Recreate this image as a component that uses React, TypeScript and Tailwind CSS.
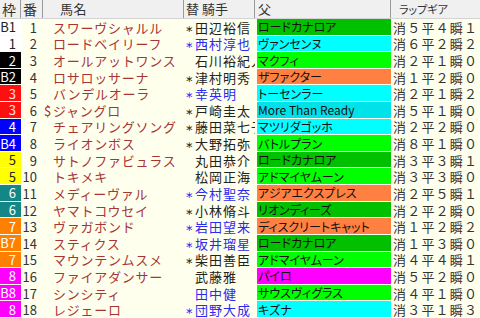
type Horse = {
  frame: string;
  waku: number;
  no: number;
  mark?: string;
  name: string;
  sub: boolean;
  jockey: string;
  blue?: boolean;
  sire: string;
  tone: "G" | "L" | "C" | "T" | "O" | "M";
  gear: string;
};

const horses: Horse[] = [
  { frame: "B1", waku: 1, no: 1, name: "スワーヴシャルル", sub: true, jockey: "田辺裕信", sire: "ロードカナロア", tone: "G", gear: "消５平４瞬１" },
  { frame: "1", waku: 1, no: 2, name: "ロードベイリーフ", sub: true, jockey: "西村淳也", blue: true, sire: "ヴァンセンヌ", tone: "C", gear: "消６平２瞬２" },
  { frame: "2", waku: 2, no: 3, name: "オールアットワンス", sub: false, jockey: "石川裕紀人", sire: "マクフィ", tone: "L", gear: "消２平１瞬０" },
  { frame: "B2", waku: 2, no: 4, name: "ロサロッサーナ", sub: true, jockey: "津村明秀", sire: "ザファクター", tone: "O", gear: "消１平２瞬０" },
  { frame: "3", waku: 3, no: 5, name: "バンデルオーラ", sub: true, jockey: "幸英明", blue: true, sire: "トーセンラー", tone: "C", gear: "消２平１瞬２" },
  { frame: "3", waku: 3, no: 6, mark: "$", name: "ジャングロ", sub: true, jockey: "戸崎圭太", sire: "More Than Ready", tone: "T", gear: "消５平１瞬０" },
  { frame: "4", waku: 4, no: 7, name: "チェアリングソング", sub: true, jockey: "藤田菜七子", sire: "マツリダゴッホ", tone: "C", gear: "消２平２瞬０" },
  { frame: "B4", waku: 4, no: 8, name: "ライオンボス", sub: true, jockey: "大野拓弥", sire: "バトルプラン", tone: "L", gear: "消８平１瞬０" },
  { frame: "5", waku: 5, no: 9, name: "サトノファビュラス", sub: false, jockey: "丸田恭介", sire: "ロードカナロア", tone: "G", gear: "消３平３瞬１" },
  { frame: "5", waku: 5, no: 10, name: "トキメキ", sub: false, jockey: "松岡正海", sire: "アドマイヤムーン", tone: "L", gear: "消３平３瞬０" },
  { frame: "6", waku: 6, no: 11, name: "メディーヴァル", sub: true, jockey: "今村聖奈", blue: true, sire: "アジアエクスプレス", tone: "O", gear: "消２平５瞬１" },
  { frame: "6", waku: 6, no: 12, name: "ヤマトコウセイ", sub: true, jockey: "小林脩斗", sire: "リオンディーズ", tone: "G", gear: "消２平２瞬０" },
  { frame: "7", waku: 7, no: 13, name: "ヴァガボンド", sub: true, jockey: "岩田望来", blue: true, sire: "ディスクリートキャット", tone: "O", gear: "消１平２瞬２" },
  { frame: "B7", waku: 7, no: 14, name: "スティクス", sub: true, jockey: "坂井瑠星", blue: true, sire: "ロードカナロア", tone: "G", gear: "消１平３瞬０" },
  { frame: "7", waku: 7, no: 15, name: "マウンテンムスメ", sub: true, jockey: "柴田善臣", sire: "アドマイヤムーン", tone: "L", gear: "消４平４瞬１" },
  { frame: "8", waku: 8, no: 16, name: "ファイアダンサー", sub: false, jockey: "武藤雅", sire: "パイロ", tone: "M", gear: "消５平２瞬０" },
  { frame: "B8", waku: 8, no: 17, name: "シンシティ", sub: false, jockey: "田中健", blue: true, sire: "サウスヴィグラス", tone: "L", gear: "消４平１瞬０" },
  { frame: "8", waku: 8, no: 18, name: "レジェーロ", sub: true, jockey: "団野大成", blue: true, sire: "キズナ", tone: "C", gear: "消３平１瞬３" },
];

const wakuColor: Record<number, string> = {
  1: "bg-white text-[#222]",
  2: "bg-black text-white",
  3: "bg-[#ff1010] text-[#ffe0e0]",
  4: "bg-[#0000ff] text-white",
  5: "bg-[#ffff00] text-[#222]",
  6: "bg-[#138686] text-white",
  7: "bg-[#ff8000] text-white",
  8: "bg-[#ff00ff] text-white",
};

const toneColor: Record<Horse["tone"], string> = {
  G: "bg-[#00c000]",
  L: "bg-[#00ff00]",
  C: "bg-[#00ffff]",
  T: "bg-[#00e2ea]",
  O: "bg-[#ff8040]",
  M: "bg-[#ff00ff]",
};

const cols = "grid grid-cols-[21px_22px_141px_71px_136px_89px]";

function Header() {
  return (
    <div className={`${cols} h-[19px] bg-[#f0f0f0] border-b border-[#d4d4d4] text-[#333] leading-[16px]`}>
      <div className="flex items-center pl-[2px] border-r border-[#9a9a9a] text-[14px]">枠</div>
      <div className="flex items-center pl-[2px] border-r border-[#9a9a9a] text-[14px]">番</div>
      <div className="flex items-center pl-[17px] border-r border-[#9a9a9a] text-[13px] tracking-[0.5px]">馬名</div>
      <div className="flex items-center pl-[2px] border-r border-[#9a9a9a] text-[13px]">替&nbsp;騎手</div>
      <div className="flex items-center pl-[3px] border-r border-[#9a9a9a] text-[13px]">父</div>
      <div className="flex items-center pl-[8px] text-[11px] [font-feature-settings:'palt']">ラップギア</div>
    </div>
  );
}

function Row({ h }: { h: Horse }) {
  return (
    <div className={`${cols} leading-[15px] min-h-0`}>
      <div className={`flex items-center justify-end pr-[5px] border-b border-[#fbfbee] text-[13px] ${wakuColor[h.waku]}`}>
        {h.frame}
      </div>
      <div className="flex items-center justify-end pr-[6px] text-[13px] text-[#333]">{h.no}</div>
      <div className="flex items-center pl-[1px] text-[13px] tracking-[0.75px] text-[#a83434] whitespace-nowrap overflow-hidden">
        <span className="w-[9px] shrink-0 tracking-normal">{h.mark ?? ""}</span>
        {h.name}
      </div>
      <div
        className={`flex items-center pl-[2px] text-[13px] tracking-[1px] whitespace-nowrap overflow-hidden ${
          h.blue ? "text-[#2a2af0]" : "text-[#222]"
        }`}
      >
        <span className="w-[9px] shrink-0 tracking-normal font-['DejaVu_Sans',sans-serif] text-[13px]">{h.sub ? "⁎" : ""}</span>
        {h.jockey}
      </div>
      <div className="pl-[2px] pb-[1px]">
        <div className={`h-full flex items-center pl-[1px] text-[12px] text-[#111] whitespace-nowrap overflow-hidden [font-feature-settings:'palt'] ${toneColor[h.tone]}`}>
          {h.sire}
        </div>
      </div>
      <div className="flex items-center pl-[2px] text-[13px] tracking-[1.2px] text-[#333] whitespace-nowrap">{h.gear}</div>
    </div>
  );
}

export default function App() {
  return (
    <div className="w-[480px] h-[318px] overflow-hidden bg-[#ffffee] font-['Noto_Sans_CJK_JP',sans-serif] flex flex-col">
      <Header />
      <div className="flex-1 grid grid-rows-[repeat(18,1fr)]">
        {horses.map((h) => (
          <Row key={h.no} h={h} />
        ))}
      </div>
    </div>
  );
}
